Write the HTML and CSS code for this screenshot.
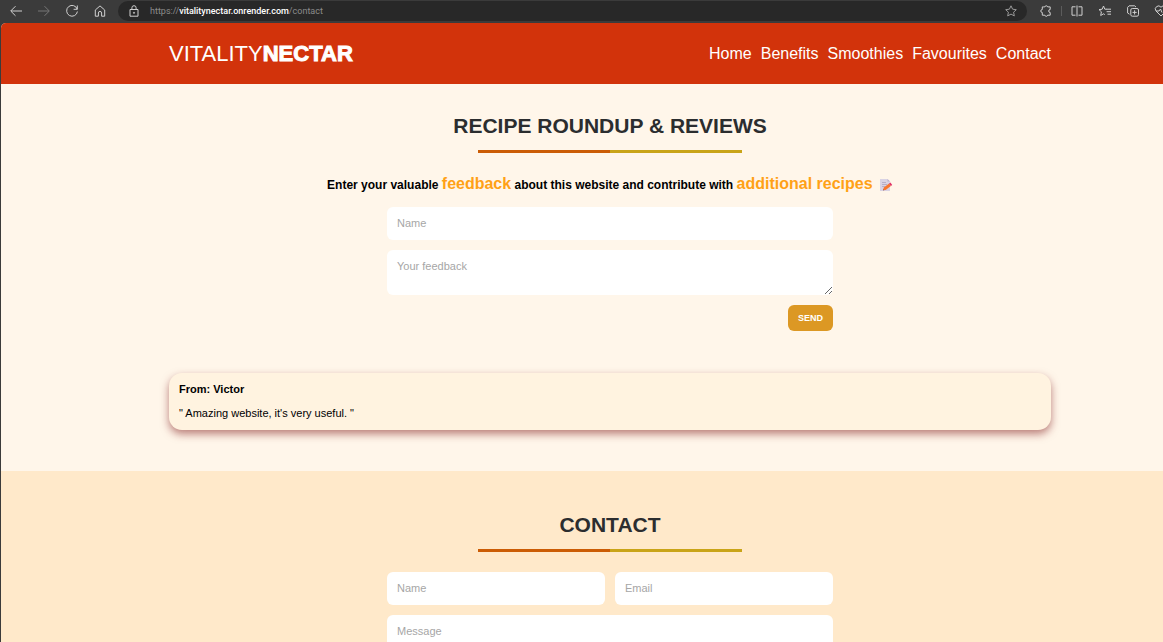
FILE: index.html
```html
<!DOCTYPE html>
<html lang="en">
<head>
<meta charset="utf-8">
<title>Vitality Nectar</title>
<link rel="stylesheet" href="styles.css">
</head>
<body>
<div class="browser">
  <div class="toolbar">
    <button class="tool" aria-label="Back"><svg viewBox="0 0 14 14"><path d="M13 7H2M6.500 2.200 1.700 7l4.800 4.800"/></svg></button>
    <button class="tool dim" aria-label="Forward"><svg viewBox="0 0 14 14"><path d="M1 7h11M7.500 2.200 12.300 7l-4.800 4.800"/></svg></button>
    <button class="tool" aria-label="Reload"><svg viewBox="0 0 14 14"><path d="M12.200 5.200A5.400 5.400 0 1 0 12.400 7.500M12.300 1.500v3.800H8.600"/></svg></button>
    <button class="tool" aria-label="Home page"><svg viewBox="0 0 14 14"><path d="M2.300 6 7 1.900 11.700 6v6.200H8.600V9a1.600 1.600 0 0 0-3.200 0v3.200H2.300z"/></svg></button>
    <div class="address">
      <svg class="lock" viewBox="0 0 14 14"><path d="M3 5.500h8v6.700H3zM4.900 5.300V3.800a2.100 2.100 0 0 1 4.200 0v1.500"/><circle cx="7" cy="8.800" r=".6"/></svg>
      <span class="url">https://<span class="host">vitalitynectar.onrender.com</span>/contact</span>
      <button class="tool star" aria-label="Add to favourites"><svg viewBox="0 0 14 14"><path d="m7 1.800 1.600 3.400 3.700.5-2.700 2.500.7 3.700L7 10.100l-3.300 1.800.7-3.700-2.700-2.500 3.700-.5z"/></svg></button>
    </div>
    <div class="extras">
      <button class="tool" aria-label="Extensions"><svg viewBox="0 0 14 14"><path d="M4.500 2.900h1.300a1.500 1.500 0 0 1 2.900 0h2.500v2.600a1.500 1.500 0 0 0 0 3v2.700H8.700a1.500 1.500 0 0 1-2.900 0H3.300V8.500a1.500 1.500 0 0 1 0-3V2.900z"/></svg></button>
      <span class="rule"></span>
      <button class="tool" aria-label="Split screen"><svg viewBox="0 0 14 14"><path d="M5.500 2.800H2v8.400h3.500M8.500 2.800H12v8.400H8.500M7 1.500v11"/></svg></button>
      <button class="tool" aria-label="Favourites list"><svg viewBox="0 0 14 14"><path d="M9 5.200H6.800L5.500 2 4.200 5.200l-3.200.4 2.400 2.200-.7 3.700 2.800-1.700 1.300.8M8.600 5.200H13M8.600 7.700H13M9.500 10.200H13"/></svg></button>
      <button class="tool" aria-label="Collections"><svg viewBox="0 0 14 14"><rect x="4.800" y="4.500" width="7.700" height="7.700" rx="1.500"/><path d="M3.500 10.200 1.600 9V3.300l1.500-1.500h5.600l1.300 1.300M8.600 6.300v4.200M6.500 8.400h4.200"/></svg></button>
      <button class="tool" aria-label="Browser essentials"><svg viewBox="0 0 14 14"><path d="M7 12 2 7a2.900 2.900 0 0 1 5-3.800A2.900 2.900 0 0 1 12 7zM2 7h3l1.500-2L8 8.500"/></svg></button>
    </div>
  </div>
  <div class="page">
    <header class="header gutter">
      <a class="logo" href="#">VITALITY<b class="logo-strong">NECTAR</b></a>
      <nav class="nav">
        <a href="#">Home</a>
        <a href="#">Benefits</a>
        <a href="#">Smoothies</a>
        <a href="#">Favourites</a>
        <a href="#contact">Contact</a>
      </nav>
    </header>
    <main>
      <section class="reviews gutter">
        <h1 class="title">RECIPE ROUNDUP &amp; REVIEWS</h1>
        <p class="intro">Enter your valuable <span class="accent">feedback</span> about this website and contribute with <span class="accent">additional recipes</span>
          <svg class="memo" viewBox="0 0 14 14" role="img" aria-label="Memo"><path d="M1 1h7.500l2.500 2.500v9.500H1z" fill="#d9d3e4"/><path d="M8.500 1 11 3.500H8.500z" fill="#b9b0cc"/><path d="M3 4.500h4M3 6.500h5M3 8.500h3" stroke="#a79fbb" stroke-width=".7"/><path d="m4 12.300.8-2.700 5.300-4 1.800 2.300-5.300 4z" fill="#f8762e"/><path d="m10.100 5.600 1.300-1 1.800 2.300-1.300 1z" fill="#e02f66"/><path d="m4 12.300.3-1.100.8 1z" fill="#493b55"/></svg>
        </p>
        <form class="form">
          <input class="field" type="text" placeholder="Name" aria-label="Name">
          <textarea class="field area" placeholder="Your feedback" aria-label="Your feedback"></textarea>
          <button class="send" type="button">SEND</button>
        </form>
        <article class="card">
          <h2 class="from">From: Victor</h2>
          <p class="quote">" Amazing website, it's very useful. "</p>
        </article>
      </section>
      <section class="contact gutter" id="contact">
        <h2 class="title">CONTACT</h2>
        <form class="form">
          <div class="pair">
            <input class="field" type="text" placeholder="Name" aria-label="Your name">
            <input class="field" type="email" placeholder="Email" aria-label="Email">
          </div>
          <textarea class="field area" placeholder="Message" aria-label="Message"></textarea>
        </form>
      </section>
    </main>
  </div>
</div>
</body>
</html>
```
FILE: styles.css
```css
* { box-sizing: border-box; }
body {
  margin: 0;
  font-family: "Liberation Sans", Arial, sans-serif;
  color: #000;
  background: #3b3b3b;
}
h1, h2, p { margin: 0; }
a { color: inherit; text-decoration: none; }
button { border: 0; padding: 0; font: inherit; }

.browser {
  display: flex;
  flex-direction: column;
  height: 100vh;
  overflow: hidden;
}
.toolbar {
  display: flex;
  flex: none;
  align-items: center;
  gap: 14px;
  height: 23px;
  padding: 0 0 2px 9px;
}
.tool {
  flex: none;
  width: 14px;
  height: 14px;
  background: none;
  color: #d0d0d0;
}
.dim { color: #777; }
.tool svg, .lock {
  display: block;
  width: 14px;
  height: 14px;
  fill: none;
  stroke: currentColor;
  stroke-width: 1;
  stroke-linejoin: round;
}
.address {
  display: flex;
  flex: 1;
  align-items: center;
  height: 20px;
  padding: 0 9px;
  margin-right: -2px;
  margin-left: -3px;
  border-radius: 10px;
  background: #282828;
  color: #d0d0d0;
}
.url {
  flex: 1;
  margin-left: 9px;
  font: 9px/14px Roboto, "Noto Sans", sans-serif;
  color: #8c8c8c;
}
.host { color: #fff; font-weight: 500; }
.star { color: #999; }
.extras {
  display: flex;
  flex: none;
  align-items: center;
  gap: 14px;
  width: 124px;
  overflow: hidden;
}
.rule {
  flex: none;
  width: 1px;
  height: 10px;
  margin: 0 -6px;
  background: #5c5c5c;
}

.page {
  flex: 1;
  overflow: hidden;
  margin-left: 1px;
  border-top-left-radius: 5px;
  background: #fff6ea;
}
.gutter { padding-right: 112px; padding-left: 168px; }
.header {
  display: flex;
  align-items: center;
  justify-content: space-between;
  height: 61px;
  background: #d2330b;
  color: #fff;
}
.logo { font-size: 22px; line-height: 26px; }
.logo-strong { -webkit-text-stroke: 1px #fff; }
.nav { display: flex; gap: 9px; font-size: 16px; line-height: 20px; }

.reviews { padding-top: 29px; padding-bottom: 41px; }
.contact { padding-top: 41px; padding-bottom: 41px; background: #ffe9ca; }
.title {
  font-size: 21px;
  line-height: 26px;
  text-align: center;
  color: #2b2d2f;
}
.title::after {
  content: "";
  display: block;
  width: 30%;
  height: 3px;
  margin: 11px auto 20px;
  background: linear-gradient(90deg, #cb5c05 50%, #c9a418 50%);
}
.intro {
  margin-bottom: 10px;
  font-size: 12px;
  font-weight: bold;
  line-height: 24px;
  text-align: center;
}
.accent { font-size: 16px; line-height: 20px; color: #ffa116; }
.memo { width: 14px; height: 14px; margin-left: 3px; vertical-align: -3px; }
.form {
  display: flex;
  flex-direction: column;
  gap: 10px;
  width: 446px;
  max-width: 100%;
  margin: 0 auto;
}
.pair { display: grid; grid-template-columns: 1fr 1fr; gap: 10px; }
.field {
  display: block;
  width: 100%;
  height: 33px;
  padding: 9px 10px 11px;
  border: 0;
  border-radius: 6px;
  background: #fff;
  font: 11px/13px "Liberation Sans", Arial, sans-serif;
}
.field::placeholder { color: #a6a6a6; }
.area { height: 45px; padding: 10px; resize: vertical; }
.send {
  align-self: flex-end;
  padding: 7px 10px;
  border-radius: 6px;
  background: #dc9824;
  color: #fff;
  font-size: 9px;
  font-weight: bold;
  line-height: 12px;
}
.card {
  margin-top: 42px;
  padding: 10px;
  border-radius: 13px;
  background: #fff3e0;
  box-shadow: 0 4px 8px rgba(130, 30, 30, .55);
}
.from { margin-bottom: 11px; font-size: 11px; line-height: 13px; }
.quote { font-size: 11px; line-height: 13px; }
```
